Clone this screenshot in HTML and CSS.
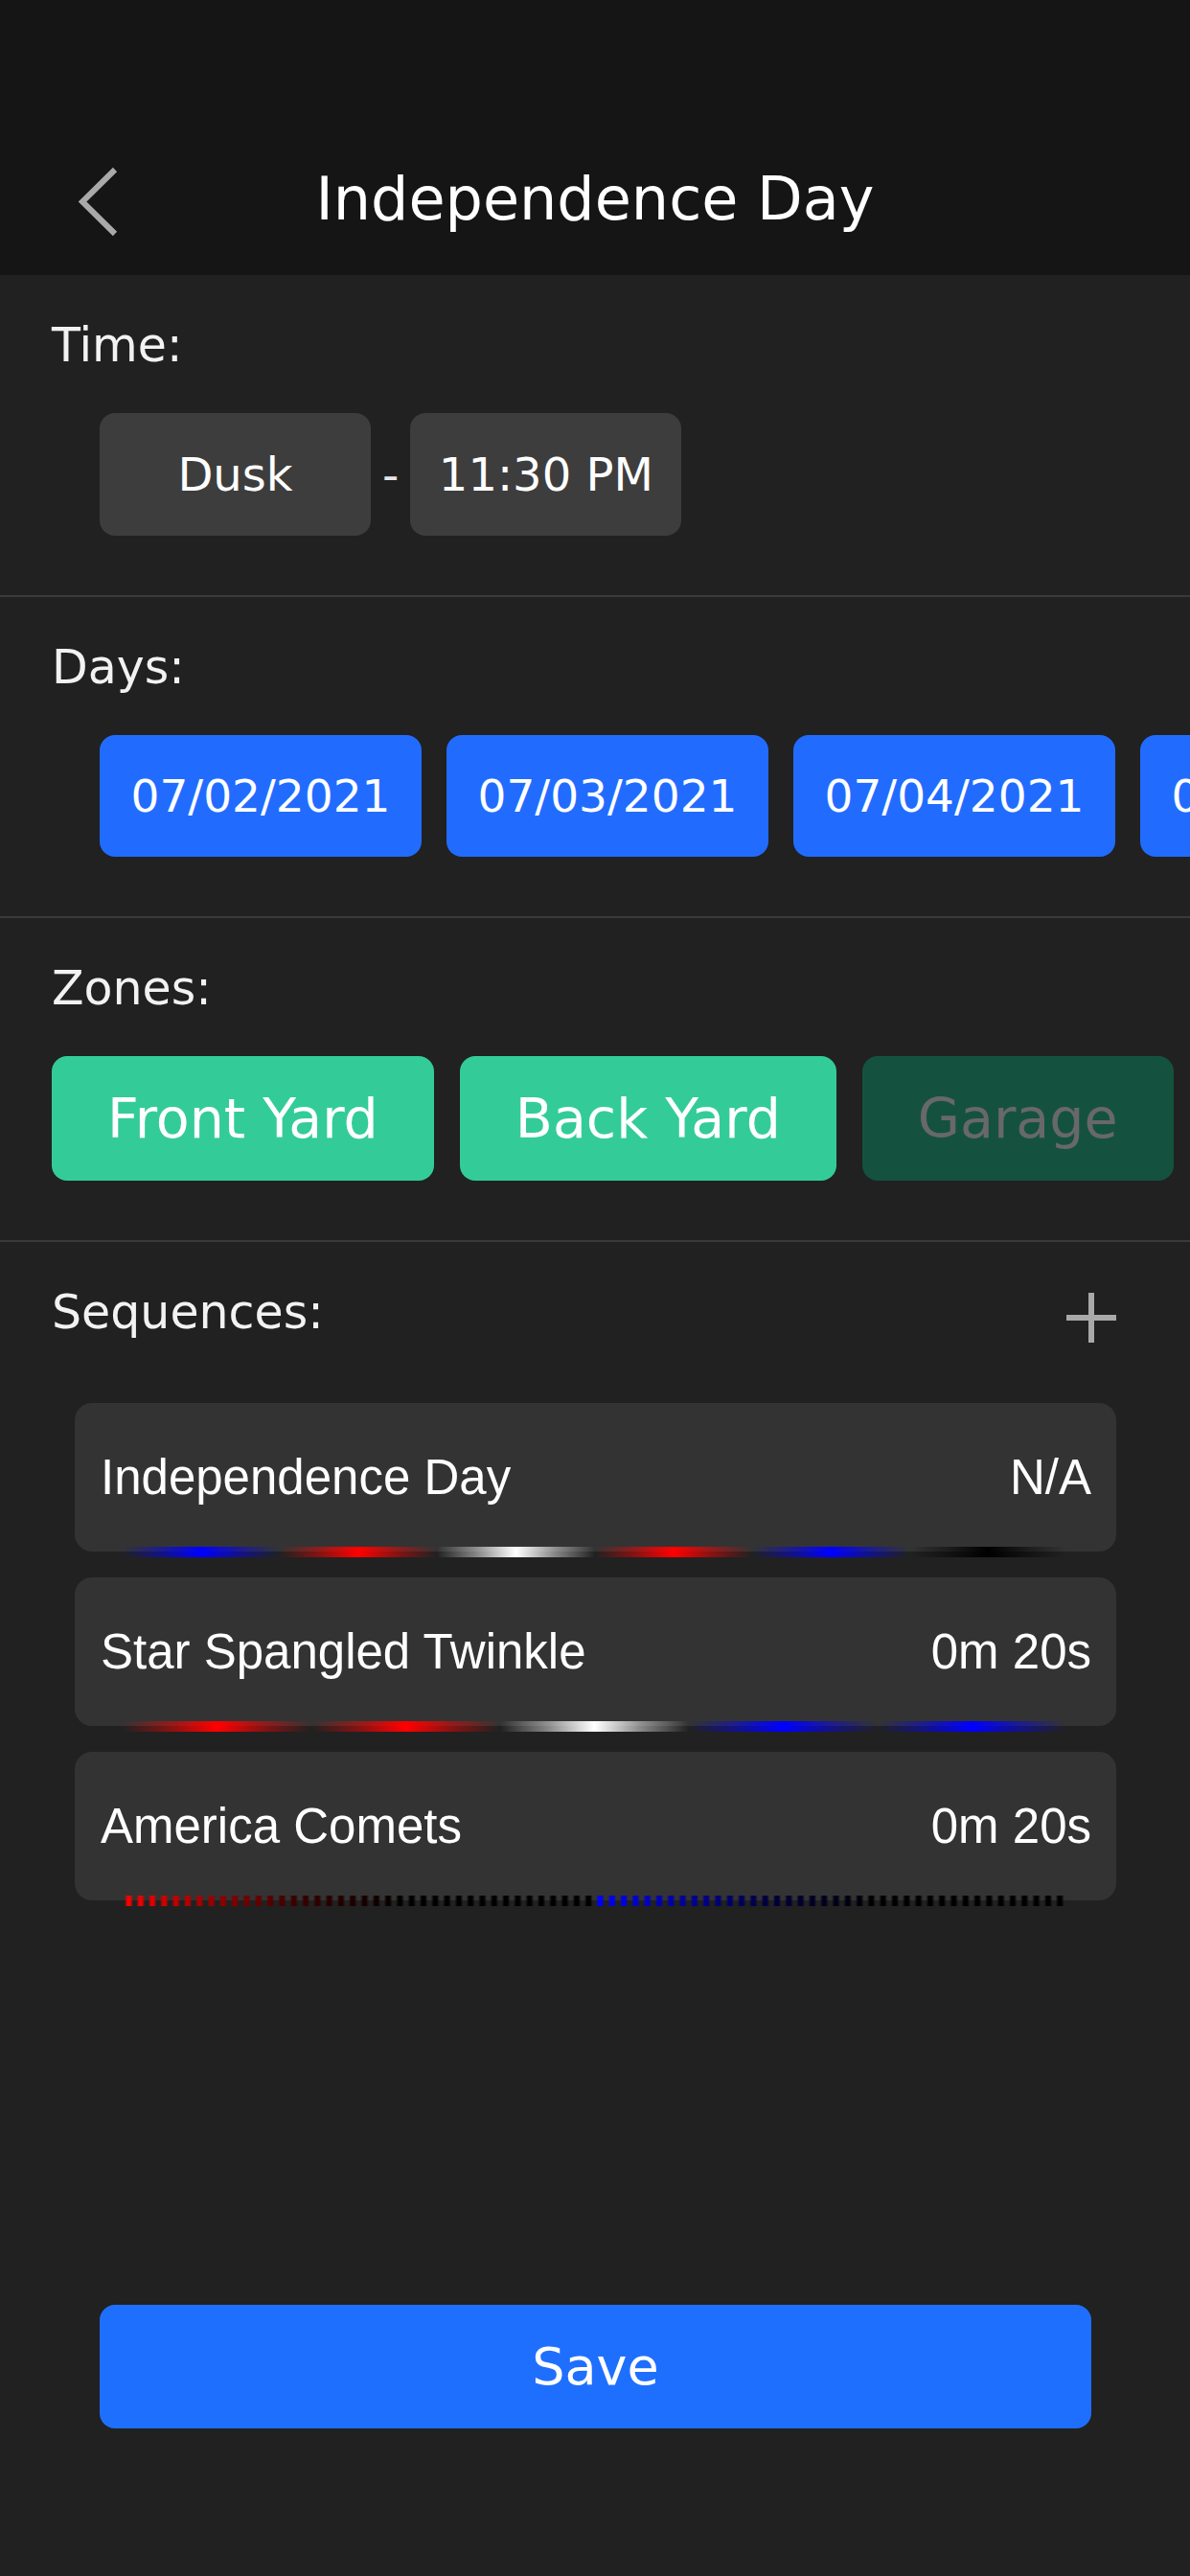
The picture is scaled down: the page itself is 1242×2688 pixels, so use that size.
FILE: index.html
```html
<!DOCTYPE html>
<html lang="en">
<head>
<meta charset="utf-8">
<title>Independence Day</title>
<link rel="stylesheet" href="styles.css">
</head>
<body>
  <header class="topbar">
    <div class="nav">
      <svg class="back" viewBox="0 0 46 75" width="46" height="75" aria-label="Back">
        <polyline points="40,4 6,37.5 40,71" fill="none" stroke="#a9a9a9" stroke-width="6"/>
      </svg>
      <h1 class="title">Independence Day</h1>
      <span></span>
    </div>
  </header>

  <section class="sec">
    <p class="label">Time:</p>
    <div class="time-row">
      <div class="time-box">Dusk</div>
      <span class="dash">-</span>
      <div class="time-box">11:30 PM</div>
    </div>
  </section>

  <section class="sec">
    <p class="label">Days:</p>
    <div class="days-row">
      <div class="day">07/02/2021</div>
      <div class="day">07/03/2021</div>
      <div class="day">07/04/2021</div>
      <div class="day">07/05/2021</div>
    </div>
  </section>

  <section class="sec">
    <p class="label">Zones:</p>
    <div class="zones-row">
      <div class="zone">Front Yard</div>
      <div class="zone">Back Yard</div>
      <div class="zone off">Garage</div>
    </div>
  </section>

  <section class="sec seqs">
    <div class="seq-head">
      <p class="label flat">Sequences:</p>
      <svg class="plus" viewBox="0 0 52 52" width="52" height="52" aria-label="Add">
        <path d="M26 0V52M0 26H52" stroke="#a9a9a9" stroke-width="6" fill="none"/>
      </svg>
    </div>
    <div class="seq-list">
      <div class="card">
        <span>Independence Day</span><span>N/A</span>
        <div class="bar">
          <i class="seg blue"></i><i class="seg red"></i><i class="seg white"></i><i class="seg red"></i><i class="seg blue"></i><i class="seg black"></i>
        </div>
      </div>
      <div class="card">
        <span>Star Spangled Twinkle</span><span>0m 20s</span>
        <div class="bar">
          <i class="seg red"></i><i class="seg red"></i><i class="seg white"></i><i class="seg blue"></i><i class="seg blue"></i>
        </div>
      </div>
      <div class="card">
        <span>America Comets</span><span>0m 20s</span>
        <div class="bar comets"></div>
      </div>
    </div>
  </section>

  <div class="save-wrap">
    <button class="save">Save</button>
  </div>
</body>
</html>
```

FILE: styles.css
```css
* { box-sizing: border-box; }

html, body {
  margin: 0;
  background: #212121;
}

body {
  width: 1242px;
  min-height: 2688px;
  display: flex;
  flex-direction: column;
  font-family: "DejaVu Sans", sans-serif;
  color: #ffffff;
  overflow: hidden;
}

.topbar {
  height: 287px;
  background: #151515;
  padding-top: 148px;
}

.nav {
  height: 120px;
  display: grid;
  grid-template-columns: 1fr auto 1fr;
  align-items: center;
}

.back {
  display: block;
  margin-left: 80px;
  margin-top: 4px;
}

.title {
  margin: 0;
  font-size: 62px;
  line-height: 62px;
  font-weight: normal;
  color: #ffffff;
  white-space: nowrap;
}

.sec {
  padding: 44px 0 62px 54px;
  border-bottom: 2px solid #3a3a3a;
}

.label {
  margin: 0 0 41px;
  font-size: 49px;
  line-height: 59px;
  color: #f2f2f2;
}

.label.flat { margin: 0; }

.time-row {
  display: flex;
  align-items: center;
  gap: 12px;
  padding-left: 50px;
}

.time-box {
  width: 283px;
  height: 128px;
  background: #3d3d3d;
  border-radius: 16px;
  display: flex;
  align-items: center;
  justify-content: center;
  font-size: 48px;
}

.dash {
  font-size: 48px;
  color: #e6e6e6;
}

.days-row {
  display: flex;
  gap: 26px;
  padding-left: 50px;
  overflow: hidden;
}

.day {
  flex: 0 0 336px;
  height: 127px;
  background: #216cff;
  border-radius: 16px;
  display: flex;
  align-items: center;
  justify-content: center;
  font-size: 47px;
  white-space: nowrap;
}

.zones-row {
  display: flex;
  gap: 27px;
}

.zone {
  flex-shrink: 0;
  height: 130px;
  padding: 0 58px;
  background: #33cc99;
  border-radius: 16px;
  display: flex;
  align-items: center;
  font-size: 57px;
  white-space: nowrap;
}

.zone.off {
  background: #14523f;
  color: #686868;
}

.seqs {
  border-bottom: none;
  padding: 44px 77px 0 54px;
}

.seq-head {
  display: flex;
  justify-content: space-between;
  align-items: flex-start;
}

.plus {
  display: block;
  margin-top: 9px;
}

.seq-list {
  margin-top: 63px;
  margin-left: 24px;
  display: flex;
  flex-direction: column;
  gap: 27px;
}

.card {
  position: relative;
  height: 155px;
  background: #333333;
  border-radius: 18px;
  display: flex;
  justify-content: space-between;
  align-items: center;
  padding: 0 26px 0 27px;
  font-family: "Liberation Sans", Arial, sans-serif;
  font-size: 51px;
  color: #ffffff;
}

.bar {
  position: absolute;
  left: 50px;
  right: 52px;
  bottom: -6px;
  height: 11px;
  display: flex;
}

.seg { flex: 1; display: block; }

.seg.blue  { background: linear-gradient(to right, rgba(0,0,255,0) 0%, rgba(0,0,255,0.45) 25%, #0000ff 50%, rgba(0,0,255,0.45) 75%, rgba(0,0,255,0) 100%); }
.seg.red   { background: linear-gradient(to right, rgba(255,0,0,0) 0%, rgba(255,0,0,0.45) 25%, #ff0000 50%, rgba(255,0,0,0.45) 75%, rgba(255,0,0,0) 100%); }
.seg.white { background: linear-gradient(to right, rgba(255,255,255,0) 0%, rgba(255,255,255,0.45) 25%, #ffffff 50%, rgba(255,255,255,0.45) 75%, rgba(255,255,255,0) 100%); }
.seg.black { background: linear-gradient(to right, rgba(0,0,0,0) 0%, rgba(0,0,0,0.45) 25%, #000000 50%, rgba(0,0,0,0.45) 75%, rgba(0,0,0,0) 100%); }

.bar.comets {
  left: 52px;
  background: linear-gradient(to right, #ff0000 0%, #3a0000 18%, #000000 30%, #000000 50%, #0000ff 50%, #000040 68%, #000000 80%, #000000 100%);
  -webkit-mask-image: repeating-linear-gradient(to right, transparent 0px, #000 3px, #000 6px, transparent 9px, transparent 12.3px);
  mask-image: repeating-linear-gradient(to right, transparent 0px, #000 3px, #000 6px, transparent 9px, transparent 12.3px);
}

.save-wrap {
  margin-top: auto;
  padding: 0 103px 154px 104px;
}

.save {
  display: block;
  width: 100%;
  height: 129px;
  border: none;
  border-radius: 16px;
  background: #1f6fff;
  color: #ffffff;
  font-family: "DejaVu Sans", sans-serif;
  font-size: 54px;
}
```
